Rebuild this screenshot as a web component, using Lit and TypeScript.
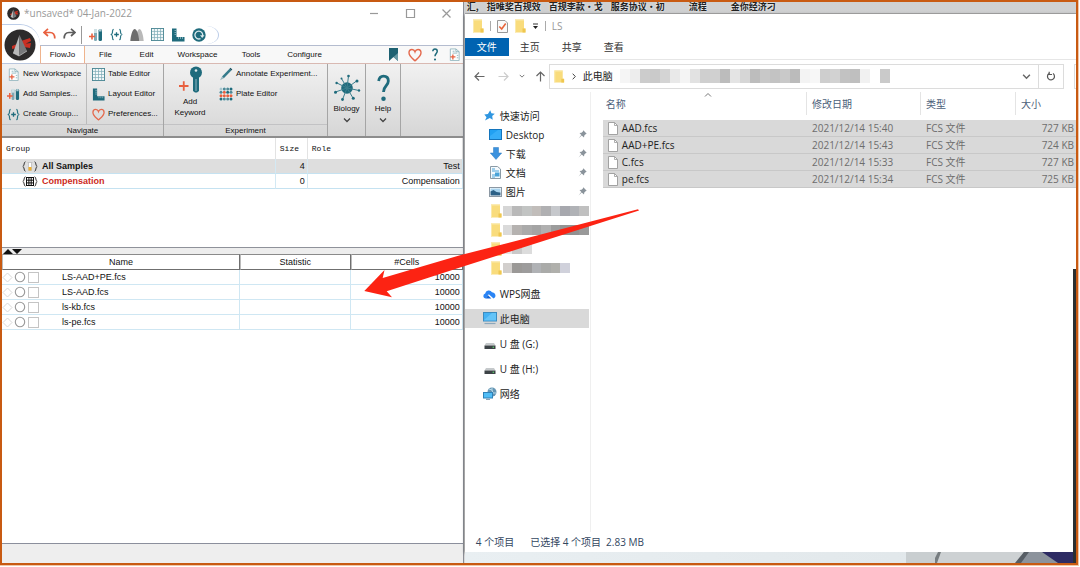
import { LitElement, html, css, svg, nothing } from "lit";
import { customElement } from "lit/decorators.js";

/* ---------- icons ---------- */

const icon = (w: number, h: number, view: string, body: unknown) =>
  html`<svg width=${w} height=${h} viewBox=${view} aria-hidden="true">${body}</svg>`;

const TEAL = "#1f6b7c";
const CORAL = "#e8603f";

const tubes = (s: number) => icon(s, s, "0 0 14 14", svg`
  <rect x="5" y="1" width="3" height="12" rx="1.3" fill="#7fa9b5"/>
  <path d="M5 1h3v4H5z" fill="#cfe0e4"/>
  <rect x="9.500" y="1" width="3.500" height="12" rx="1.500" fill="${TEAL}"/>
  <path d="M10 1h2.500v2.500H10z" fill="#a9c8d0"/>
  <path d="M0 8.500h6M3 5.500v6" stroke="${CORAL}" stroke-width="1.600"/>`);

const braces = (s: number) => icon(s, s, "0 0 14 14", svg`
  <path d="M4 1.500C2 1.500 3 4 2.500 5.500 2.200 6.500 1 7 .7 7c.3 0 1.500.5 1.800 1.500C3 10 2 12.500 4 12.500M10 1.500c2 0 1 2.500 1.500 4 .3 1 1.500 1.500 1.800 1.500-.3 0-1.500.5-1.800 1.500-.5 1.500.5 4-1.500 4" fill="none" stroke="#2a7585" stroke-width="1.300"/>
  <path d="M4.500 7h5M7 4.500v5" stroke="${TEAL}" stroke-width="1.400"/>`);

const grid = (s: number) => icon(s, s, "0 0 14 14", svg`
  <rect x=".5" y=".5" width="13" height="13" fill="#f4f9fa" stroke="#4b8794"/>
  <path d="M1 3.700h12M1 7h12M1 10.300h12M3.700 1v12M7 1v12M10.300 1v12" stroke="#7fadb7" stroke-width=".8"/>`);

const ruler = (s: number) => icon(s, s, "0 0 14 14", svg`
  <path d="M1 .5h4.500v8.500H13.500v4.500H1z" fill="${TEAL}"/>
  <path d="M3.500 2.500h2M3.500 4.500h2M3.500 6.500h2M7.500 9v2M9.500 9v2M11.500 9v2" stroke="#8fb9c3" stroke-width=".8"/>`);

const heart = (s: number) => icon(s, s, "0 0 14 14", svg`
  <path d="M7 12.800C4.500 10.500 1 8.200 1 4.800 1 2.800 2.400 1.500 4 1.500c1.400 0 2.500.9 3 2.300.5-1.400 1.600-2.300 3-2.300 1.600 0 3 1.300 3 3.300 0 3.400-3.500 5.700-6 8z" fill="none" stroke="#e4694d" stroke-width="1.400"/>`);

const newDoc = (s: number) => icon(s, s, "0 0 14 14", svg`
  <path d="M2.500 1h6l3.500 3v9.500h-9.500z" fill="#fbfdfd" stroke="#8fb3bc" stroke-width=".9"/>
  <path d="M8.500 1v3H12M5 3.500h2M5 5.500h5M9.500 8h1.500M9.500 10.500h1.500" fill="none" stroke="#7aa7b2" stroke-width=".8"/>
  <path d="M2.500 9.500h5.500M5.250 7v5.500" stroke="${CORAL}" stroke-width="1.400"/>`);

const pencil = icon(14, 14, "0 0 14 14", svg`
  <path d="M3 9.500L10.500 1.800l1.800 1.800L4.800 11.200z" fill="#347a8b"/>
  <path d="M10.500 1.800l1-1 1.800 1.800-1 1z" fill="#174f5e"/>
  <path d="M3 9.500l1.800 1.700L1 13.200z" fill="#93b4bd"/>`);

const plate = icon(14, 14, "0 0 14 14", svg`
  <rect x=".5" y=".5" width="13" height="13" fill="#eaf0f1"/>
  ${[2, 5.300, 8.700, 12].map((x, i) => [2, 5.300, 8.700, 12].map((y, j) => svg`
    <circle cx=${x} cy=${y} r="1.500" fill=${i === 0 && j === 0 ? "#a8c6ce" : j === 2 || (i === 1 && j === 1) ? CORAL : (i + j) % 3 === 0 ? TEAL : "#4f8997"}/>`))}`);

const key = icon(26, 27, "0 0 26 27", svg`
  <circle cx="19" cy="6.500" r="6" fill="${TEAL}"/>
  <circle cx="19" cy="4.500" r="1.300" fill="#dfe9eb"/>
  <path d="M16 10h6v15l-2 1.500h-2l-2-1.500z" fill="${TEAL}"/>
  <path d="M19 13v12" stroke="#8fb7c0" stroke-width="1"/>
  <path d="M2 20h9.500M6.750 15.200v9.600" stroke="${CORAL}" stroke-width="1.800"/>`);

const biology = icon(28, 28, "0 0 28 28", svg`
  <circle cx="14" cy="14" r="5.800" fill="${TEAL}"/>
  <g stroke="#3c7f8e" stroke-width="1">
    <path d="M14 14L15.500 2M14 14L23.500 7M14 14L26 16.500M14 14L20 24M14 14L9.500 25.500M14 14L2.500 18M14 14L4 9M14 14L8.500 4.500"/></g>
  <g fill="${TEAL}"><circle cx="15.500" cy="2" r="1.300"/><circle cx="24" cy="7" r="1.500"/><circle cx="26" cy="16.500" r="1.200"/><circle cx="20.300" cy="24.300" r="1.500"/><circle cx="9.500" cy="25.500" r="1.400"/><circle cx="2.500" cy="18.300" r="1.500"/><circle cx="3.600" cy="9" r="1.200"/><circle cx="8.500" cy="4.500" r="1"/></g>`);

const question = (w: number, h: number, sw: number) => icon(w, h, "0 0 12 26", svg`
  <path d="M1.500 6.500C2 3 4 2 6 2c2.800 0 4.500 1.800 4.500 4.600 0 4.400-4.500 4.400-4.500 10" fill="none" stroke="${TEAL}" stroke-width=${sw}/>
  <circle cx="6" cy="23" r="2.100" fill="${TEAL}"/>`);

const chevron = (s: number, color = "#444") => icon(s, s, "0 0 8 8", svg`
  <path d="M1 2.500L4 5.500l3-3" fill="none" stroke=${color} stroke-width="1.300"/>`);

const undo = icon(13, 14, "0 0 13 14", svg`
  <path d="M5 .8L1 4.500 5 8M1.500 4.500H7c3.200 0 4.800 2 4.800 6" fill="none" stroke="${CORAL}" stroke-width="1.700"/>`);
const redo = icon(13, 14, "0 0 13 14", svg`
  <path d="M8 .8L12 4.500 8 8M11.500 4.500H6c-3.200 0-4.800 2-4.800 6" fill="none" stroke="#5d5d5d" stroke-width="1.700"/>`);
const peaks = icon(14, 14, "0 0 14 14", svg`
  <path d="M5 13C6 5 8 1 9.500 1S13 5 13.700 13z" fill="#b9b9b9"/>
  <path d="M.3 13C1 5 3 1 4.700 1S8.500 5 9.200 13z" fill="#6e6e6e"/>`);
const swirl = icon(14, 14, "0 0 14 14", svg`
  <circle cx="7" cy="7" r="6.700" fill="${TEAL}"/>
  <path d="M8.500 10.600A3.900 3.900 0 1 1 10.600 8" fill="none" stroke="#dcebee" stroke-width="1.300"/>
  <path d="M8 7.300h4.500L10.200 10z" fill="#dcebee"/>`);
const bookmark = icon(9, 13, "0 0 9 13", svg`
  <path d="M0 0h9v13L4.500 9 0 13z" fill="#1d6172"/><path d="M9 5v8L4.500 9z" fill="#6899a5"/>`);

const logo = (s: number) => icon(s, s, "0 0 32 32", svg`
  <circle cx="16" cy="16" r="15.500" fill="#2d2b2b"/>
  <path d="M17 12l9-3 1 3-8 4zM19 15l8-1-1 5-6-1zM8 17l5-2-1 4-4 1z" fill="#c92f23"/>
  <path d="M15.500 6L9 24l6 3z" fill="#b9b9b9"/>
  <path d="M15.500 6L15 27l8-5z" fill="#77787a"/>
  <path d="M9 24l6 3 8-5" fill="none" stroke="#d8d8d8" stroke-width=".6"/>`);

const folder = (w = 12, h = 14) => icon(w, h, "0 0 12 14", svg`
  <path d="M1 .5h9v9h1.500v4H1z" fill="#f9dc7c"/>
  <path d="M1 .5h9v1H2v12H1z" fill="#fae9ac"/>
  <path d="M8.500 9.500h3v4h-3z" fill="#efc750"/>`);
const checkDoc = icon(11, 13, "0 0 11 13", svg`
  <path d="M.5.5h7.500l2.500 2.500v9.500H.5z" fill="#fafafa" stroke="#999"/>
  <path d="M2.300 6.500L4.700 9l4-5.500" fill="none" stroke="#e8653a" stroke-width="1.600"/>`);
const fileIcon = icon(10, 13, "0 0 10 13", svg`
  <path d="M.5.5h6l3 3v9h-9z" fill="#fff" stroke="#9a9a9a" stroke-width=".9"/><path d="M6.500.5v3h3" fill="none" stroke="#9a9a9a" stroke-width=".8"/>`);
const pinIcon = icon(9, 9, "0 0 9 9", svg`
  <path d="M5.300.3L8.700 3.700 7.600 4.200 6.300 5.600 6 7.500 3.700 5.500.5 8.600 3.300 5 1.500 3 3.500 2.700 4.900 1.400z" fill="#8a939b"/>`);
const star = icon(11, 11, "0 0 11 11", svg`
  <path d="M6.200.3l1.200 3 3.400.5-2.600 2.300.5 3.600-2.900-1.600L1 10.500l1.500-3.200L.3 4.600l3.600-.5z" fill="#2f96e0"/>`);
const desktopIcon = icon(13, 11, "0 0 13 11", svg`
  <rect x=".5" y=".5" width="12" height="10" fill="#21a0f2" stroke="#1475bd"/><path d="M1 7L9 1h3v9H1z" fill="#45b6fb" opacity=".6"/>`);
const download = icon(12, 13, "0 0 12 13", svg`
  <path d="M3.500.5h5v5.500h3.200L6 12.500.3 6h3.200z" fill="#3b92de" stroke="#2b78c0" stroke-width=".5"/>`);
const docIcon = icon(11, 13, "0 0 11 13", svg`
  <path d="M.5.5h7l3 2.500v9.500H.5z" fill="#f5fafd" stroke="#8a9aa5"/>
  <path d="M2 3h3M2 5h7M2 9h3M2 11h3" stroke="#4aa3d8"/><rect x="5" y="6.500" width="4.500" height="4" fill="#4aa3d8"/>`);
const picture = icon(13, 10, "0 0 13 10", svg`
  <rect x=".5" y=".5" width="12" height="9" fill="#fff" stroke="#8c98a3"/>
  <path d="M1.500 1.500h10v4h-10z" fill="#a9d4ef"/><path d="M1.500 4.500l3-1.500 3 2 4 .5v3h-10z" fill="#2c6187"/>`);
const cloud = icon(13, 10, "0 0 13 10", svg`
  <path d="M2.500 9.500a2.500 2.500 0 0 1-.3-4.900A3.700 3.700 0 0 1 9 3.200a3.300 3.300 0 0 1 1.500 6.300L5.800 5.200z" fill="#2a84f5"/>
  <path d="M2.500 9.500L5 6.200 8.300 9.500z" fill="#1263d6"/>`);
const pc = icon(14, 13, "0 0 14 13", svg`
  <rect x=".5" y=".5" width="13" height="8.500" fill="#45b2f3" stroke="#3d8cc0"/><path d="M1 8L9 1h4v7.500H1z" fill="#7cd0fc" opacity=".6"/><path d="M1.500 11.500h11" stroke="#8ba7bb" stroke-width="1.200"/>`);
const drive = icon(12, 12, "0 0 12 12", svg`
  <path d="M2 5h8l1.500 2.500H.5z" fill="#c5c9cb"/><rect x=".5" y="7.500" width="11" height="3.500" fill="#3d4347"/><circle cx="9.300" cy="9.300" r=".8" fill="#58d36b"/>`);
const network = icon(14, 13, "0 0 14 13", svg`
  <circle cx="9" cy="5" r="4.500" fill="#6595b3"/><path d="M6 2l3 1 1 3 3 0M9 .5v3" stroke="#b9d9e8" fill="none"/>
  <rect x=".5" y="5.500" width="9" height="5.500" fill="#50bdf6" stroke="#2f82b8"/><path d="M3 12.300h4" stroke="#6d8ea5"/>`);
const arrow = (d: string, color: string) => icon(11, 11, "0 0 11 11", svg`<path d=${d} fill="none" stroke=${color} stroke-width="1.200"/>`);
const refresh = icon(10, 10, "0 0 10 10", svg`
  <path d="M2.700 2.800A3.500 3.500 0 1 0 7 2.600M3.200 .8v2.700H6" fill="none" stroke="#555" stroke-width="1.200"/>`);

/* ---------- shared styles ---------- */

const base = css`
  *, *::before, *::after { box-sizing: border-box; }
  svg { display: block; flex: none; }
  button { appearance: none; border: 0; margin: 0; padding: 0; background: none; font: inherit; color: inherit; display: flex; align-items: center; }
  a { color: inherit; text-decoration: none; }
  table { border-spacing: 0; border-collapse: separate; width: 100%; table-layout: fixed; }
  th, td { padding: 0; font-weight: normal; text-align: left; white-space: nowrap; overflow: hidden; }
`;

/* ---------- cytometry workspace window ---------- */

@customElement("flow-window")
class FlowWindow extends LitElement {
  static styles = [base, css`
    :host { display: flex; flex-direction: column; background: #fff; color: #111; font: 9px/12px "Liberation Sans", Arial, sans-serif; border-right: 1px solid #8b8e96; min-width: 0; }
    .title { display: flex; align-items: center; height: 22px; padding: 0 11px 0 5px; gap: 4px; color: #999; font: 10px/14px "Open Sans", "Noto Sans", sans-serif; }
    .title .name { flex: 1; }
    .controls { display: flex; gap: 25px; }
    .head { display: grid; grid-template-columns: 38px 1fr; grid-template-rows: 22px 18px; }
    .orb { grid-row: 1 / 3; display: flex; align-items: center; padding: 4px 0 3px 2px; border-bottom: 1px solid #b9c6de; border-top: 1px solid #bccde8; border-top-right-radius: 20px; }
    .quick { display: flex; align-items: center; border-bottom: 1px solid #b4bccf; padding-left: 3px; gap: 7px; }
    .quick .bar { width: 1px; height: 18px; background: #999; margin: 0 0 0 -2px; }
    .quick .tools { display: flex; align-items: center; gap: 7px; height: 18px; padding-right: 12px; border-top-right-radius: 12px 9px; border-bottom-right-radius: 12px 9px; border-right: 1px solid #bccde8; }
    .menu { display: flex; align-items: center; font-size: 8px; border-bottom: 1px solid #d9b9b2; background: #f8f8f8; }
    .menu button { height: 100%; justify-content: center; }
    .menu .tab { width: 45px; border-left: 1px solid #efb48d; border-right: 1px solid #efb48d; background: #fff; }
    .menu .m { width: 41px; }
    .menu .wide { width: 61px; }
    .menu .mid { width: 46px; }
    .menu .right { margin-left: auto; display: flex; align-items: center; gap: 10px; padding-right: 2px; }
    .ribbon { display: flex; height: 74px; font-size: 8px; line-height: 10px; background: linear-gradient(#f1f1f1, #d6d6d6); border-bottom: 2px solid #8d8d8d; }
    .group { display: flex; flex-direction: column; border-right: 1px solid #a5a5a5; }
    .cols { display: flex; height: 60px; }
    .caption { height: 12px; line-height: 11px; text-align: center; border-top: 1px solid #c2c2c4; }
    .col { display: grid; grid-template-rows: repeat(3, 20px); align-content: start; padding: 0 4px 0 5px; }
    .col + .col { border-left: 1px solid #bbb; }
    .col button, .ann button { gap: 3px; white-space: nowrap; }
    .nav1 { width: 84px; }
    .nav2 { width: 77px; padding-right: 0; }
    .kw { width: 52px; flex-direction: column; padding-top: 2px; line-height: 11px; text-align: center; gap: 3px; }
    .ann { display: grid; grid-template-rows: repeat(2, 20px); align-content: start; width: 111px; padding-left: 3px; }
    .big { flex-direction: column; height: 100%; padding-top: 10px; gap: 2px; border-right: 1px solid #a5a5a5; }
    .bio { width: 38px; }
    .help { width: 35px; }
    .groups { flex: 0 0 110px; border-bottom: 1px solid #8f929a; }
    .groups th { height: 21px; padding-left: 4px; font: 8px/12px "Liberation Mono", monospace; border-right: 1px solid #e3e3e3; }
    .groups td { height: 15px; border-bottom: 1px solid #c5e2f1; border-right: 1px solid #d3e9f4; }
    .groups .sel td { background: #dedede; }
    .groups .g { display: flex; align-items: center; gap: 4px; padding-left: 20px; font-weight: bold; }
    .groups .red { color: #cc2a22; }
    .groups td.num { text-align: right; padding-right: 2px; }
    .c-size { width: 32px; }
    .c-role { width: 155px; }
    .splitter { display: flex; align-items: center; height: 6px; background: #ededed; padding-left: 1px; }
    .samples { flex: 1; border-bottom: 1px solid #8b8f9c; min-height: 100px; }
    .samples th { height: 16px; text-align: center; border: 1px solid #6f6f6f; border-left-color: #bbb; border-top: 1px solid #8a8a8a; line-height: 13px; }
    .samples td { height: 15px; border-bottom: 1px solid #cfe7f3; border-right: 1px solid #cfe7f3; }
    .samples td.num { text-align: right; padding-right: 2px; }
    .c-stat { width: 111px; }
    .c-cells { width: 112px; }
    .row { display: flex; align-items: center; gap: 1px; }
    .row .file { margin-left: 22px; }
    .row input { appearance: none; width: 11px; height: 11px; margin: 0 0 0 1px; border: 1px solid #c4c4c4; background: #fff; }
    .foot { height: 19px; background: #eee; }
  `];

  private groups = [
    { name: "All Samples", size: 4, role: "Test", sel: true },
    { name: "Compensation", size: 0, role: "Compensation", sel: false },
  ];
  private samples = ["LS-AAD+PE.fcs", "LS-AAD.fcs", "ls-kb.fcs", "ls-pe.fcs"];

  private groupIcon(first: boolean) {
    return icon(16, 11, "0 0 16 11", svg`
      <path d="M3.500.8C1.500.8 2.800 5 .8 5.500c2 .5.700 4.700 2.700 4.700M12.500.8c2 0 .700 4.200 2.700 4.700-2 .5-.700 4.700-2.700 4.700" fill="none" stroke="#333"/>
      ${first
        ? svg`<path d="M5.500 1.500h5M6.500 1.500v8h3v-8" fill="#fff" stroke="#bbb" stroke-width=".8"/><path d="M6.500 6h3v3.500h-3z" fill="#f0b030"/>`
        : svg`<rect x="4.500" y="1.500" width="7" height="8" fill="#fff" stroke="#111"/><path d="M4 4.200h8M4 6.900h8M6.900 1.500v8M9.200 1.500v8" stroke="#111"/>`}`);
  }

  render() {
    return html`
      <header class="title">
        ${logo(13)}<span class="name">*unsaved* 04-Jan-2022</span>
        <div class="controls">
          <button aria-label="Minimize">${arrow("M1 5.500h8", "#999")}</button>
          <button aria-label="Maximize">${arrow("M1.500 1.500h8v8h-8z", "#999")}</button>
          <button aria-label="Close">${arrow("M1.500 1.500l8 8M9.500 1.500l-8 8", "#999")}</button>
        </div>
      </header>
      <div class="head">
        <button class="orb" aria-label="Application menu">${logo(32)}</button>
        <div class="quick">
          <button aria-label="Undo">${undo}</button>
          <button aria-label="Redo">${redo}</button>
          <span class="bar"></span>
          <div class="tools">
            <button aria-label="Add samples">${tubes(14)}</button>
            <button aria-label="Create group">${braces(13)}</button>
            <button aria-label="Histogram">${peaks}</button>
            <button aria-label="Tables">${grid(13)}</button>
            <button aria-label="Layouts">${ruler(14)}</button>
            <button aria-label="Sync">${swirl}</button>
          </div>
        </div>
        <nav class="menu">
          <button class="tab">FlowJo</button><button class="m">File</button><button class="m">Edit</button>
          <button class="wide">Workspace</button><button class="mid">Tools</button><button class="wide">Configure</button>
          <div class="right">
            <button aria-label="Bookmark">${bookmark}</button>
            <button aria-label="Favorite">${heart(14)}</button>
            <button aria-label="Help">${question(6, 13, 3)}</button>
            <button aria-label="New">${newDoc(13)}</button>
          </div>
        </nav>
      </div>
      <div class="ribbon">
        <section class="group">
          <div class="cols">
            <div class="col nav1">
              <button>${newDoc(13)}New Workspace</button>
              <button>${tubes(13)}Add Samples...</button>
              <button>${braces(13)}Create Group...</button>
            </div>
            <div class="col nav2">
              <button>${grid(13)}Table Editor</button>
              <button>${ruler(13)}Layout Editor</button>
              <button>${heart(13)}Preferences...</button>
            </div>
          </div>
          <div class="caption">Navigate</div>
        </section>
        <section class="group">
          <div class="cols">
            <button class="kw">${key}<span>Add<br />Keyword</span></button>
            <div class="ann">
              <button>${pencil}Annotate Experiment...</button>
              <button>${plate}Plate Editor</button>
            </div>
          </div>
          <div class="caption">Experiment</div>
        </section>
        <button class="big bio">${biology}<span>Biology</span>${chevron(8)}</button>
        <button class="big help">${question(13, 28, 2.600)}<span>Help</span>${chevron(8)}</button>
      </div>
      <div class="groups">
        <table>
          <colgroup><col /><col class="c-size" /><col class="c-role" /></colgroup>
          <thead><tr><th>Group</th><th>Size</th><th>Role</th></tr></thead>
          <tbody>${this.groups.map((g) => html`
            <tr class=${g.sel ? "sel" : ""}>
              <td><div class="g ${g.sel ? "" : "red"}">${this.groupIcon(g.sel)}${g.name}</div></td>
              <td class="num">${g.size}</td><td class="num">${g.role}</td>
            </tr>`)}
          </tbody>
        </table>
      </div>
      <div class="splitter">${icon(19, 5, "0 0 19 5", svg`<path d="M0 5L5 0l5 5zM9 0h10l-5 5z" fill="#111"/>`)}</div>
      <div class="samples">
        <table>
          <colgroup><col /><col class="c-stat" /><col class="c-cells" /></colgroup>
          <thead><tr><th>Name</th><th>Statistic</th><th>#Cells</th></tr></thead>
          <tbody>${this.samples.map((s) => html`
            <tr>
              <td><div class="row">
                ${icon(11, 11, "0 0 11 11", svg`<path d="M5.500 1L10 5.500 5.500 10 1 5.500z" fill="#fff" stroke="#d8d8d8"/>`)}
                ${icon(12, 12, "0 0 12 12", svg`<circle cx="6" cy="6" r="4.700" fill="#fff" stroke="#999" stroke-width="1.100"/>`)}
                <input type="checkbox" aria-label=${s} /><span class="file">${s}</span>
              </div></td>
              <td></td><td class="num">10000</td>
            </tr>`)}
          </tbody>
        </table>
      </div>
      <div class="foot"></div>`;
  }
}

/* ---------- file explorer window ---------- */

interface Place { label?: string; icon: unknown; pin?: boolean; sel?: boolean; blur?: string[] }

@customElement("file-window")
class FileWindow extends LitElement {
  static styles = [base, css`
    :host { display: flex; flex-direction: column; background: #fff; color: #222; font: 10px/14px "Open Sans", "Noto Sans CJK SC", sans-serif; min-width: 0; overflow: hidden; }
    .title { display: flex; align-items: center; gap: 6px; height: 24px; padding-left: 7px; color: #999; }
    .title .bar { width: 1px; height: 10px; background: #aaa; }
    .tabs { display: flex; height: 22px; border-bottom: 1px solid #e6e6e6; }
    .tabs button { justify-content: center; width: 42px; height: 18px; color: #333; }
    .tabs .on { width: 44px; background: #0063b1; color: #fff; }
    .bar-row { display: flex; align-items: center; height: 32px; padding-left: 9px; }
    .moves { display: flex; align-items: center; gap: 10px; width: 75px; }
    .moves button:first-child { margin-right: 3px; }
    .path { display: flex; flex: 1; height: 25px; border: 1px solid #dcdcdc; align-items: center; padding-left: 3px; gap: 7px; margin-right: 10px; }
    .path .grow { flex: 1; min-width: 0; }
    .path .re { width: 25px; height: 100%; justify-content: center; border-left: 1px solid #dcdcdc; }
    .search { width: 2px; height: 25px; border: 1px solid #dcdcdc; border-right: 0; }
    .mosaic { display: flex; height: 14px; }
    .mosaic i { flex: 1 1 10px; max-width: 10px; }
    .main { display: flex; flex: 1; }
    .side { flex: 0 0 126px; border-right: 1px solid #efefef; padding-top: 14px; margin: 0; }
    .place { display: flex; align-items: center; height: 19px; width: 124px; padding-left: 18px; gap: 3px; white-space: nowrap; }
    .place .ic { display: flex; justify-content: center; width: 14px; }
    .place.sub { padding-left: 24px; }
    .place.gap { margin-top: 6px; }
    .place.first { margin-top: 7px; }
    .place.sel { background: #d9d9d9; }
    .place .pin { margin-left: auto; padding-right: 2px; }
    .place .mosaic { height: 10px; flex: 1; margin-left: -3px; }
    .files { flex: 1; padding-left: 12px; min-width: 0; }
    .files th { height: 23px; color: #4c607a; padding-left: 5px; border-right: 1px solid #e4e4e4; }
    .files th:first-child { padding-left: 3px; position: relative; }
    .files th:last-child { border-right: 0; }
    .sort { position: absolute; left: 50%; top: 0; }
    .files .space td { height: 5px; border: 0; background: none; }
    .files td { height: 17px; background: #d9d9d9; border-bottom: 1px solid #c8c8c8; padding-left: 5px; color: #6d6d6d; line-height: 14px; }
    .files td.name { color: #222; padding-left: 5px; }
    .files td.size { text-align: right; padding: 0 2px 0 0; }
    .nm { display: flex; align-items: center; gap: 4px; }
    .c-date { width: 114px; } .c-type { width: 95px; } .c-size { width: 60px; }
    .status { display: flex; gap: 16px; height: 20px; align-items: center; padding-left: 11px; color: #33475f; }
    .status .sum { display: flex; gap: 5px; }
  `];

  private trail = ["#f5f5f5", "#ededed", "#ccc", "#cacaca", "#d4d4d4", "#e9e9e9", "#f4f4f4", "#e2e2e2", "#cfcfcf", "#d0d0d0", "#bcbcbc", "#e4e4e4", "#d6d6d6", "#bdbdbd", "#c8c8c8", "#c3c3c3", "#c9c9c9", "#bbb", "#f3f3f3", "#f7f7f7", "#cecece", "#d2d2d2", "#c2c2c2", "#bfbfbf", "#f1f1f1", "#fff", "#cacaca"];
  private places: Place[] = [
    { label: "快速访问", icon: star },
    { label: "Desktop", icon: desktopIcon, pin: true },
    { label: "下载", icon: download, pin: true },
    { label: "文档", icon: docIcon, pin: true },
    { label: "图片", icon: picture, pin: true },
    { icon: folder(), blur: ["#d6d6d6", "#b9b9b9", "#c2c4c3", "#c1bdba", "#b0b0b2", "#c6c8cc", "#a7a8ae", "#b0b2b6", "#c0c0c0"] },
    { icon: folder(), blur: ["#dadada", "#b5b2b0", "#aaa", "#a4a4a4", "#b0b0b0", "#9c9c9c", "#949494", "#929292", "#999"] },
    { icon: folder(), blur: ["#e5e5e5", "#c9c9c9", "#dcdcdc", "#fff", "#fff", "#fff", "#fff", "#fff", "#fff"] },
    { icon: folder(), blur: ["#d2cfcd", "#9b9997", "#9d9c9c", "#b0b2b5", "#aaaba9", "#b0b0ac", "#d0d1db", "#fff", "#fff"] },
    { label: "WPS网盘", icon: cloud },
    { label: "此电脑", icon: pc, sel: true },
    { label: "U 盘 (G:)", icon: drive },
    { label: "U 盘 (H:)", icon: drive },
    { label: "网络", icon: network },
  ];
  private files = [
    ["AAD.fcs", "2021/12/14 15:40", "727 KB"],
    ["AAD+PE.fcs", "2021/12/14 15:43", "724 KB"],
    ["C.fcs", "2021/12/14 15:33", "727 KB"],
    ["pe.fcs", "2021/12/14 15:34", "725 KB"],
  ];

  private mosaic(colors: string[]) {
    return html`<span class="mosaic">${colors.map((c) => html`<i style="background:${c}"></i>`)}</span>`;
  }

  render() {
    return html`
      <header class="title">
        ${folder()}<span class="bar"></span>${checkDoc}${folder()}
        ${icon(7, 7, "0 0 7 7", svg`<path d="M1 1h5" stroke="#333"/><path d="M1 3h5L3.500 6z" fill="#222"/>`)}
        <span class="bar"></span><span>LS</span>
      </header>
      <nav class="tabs"><button class="on">文件</button><button>主页</button><button>共享</button><button>查看</button></nav>
      <div class="bar-row">
        <div class="moves">
          <button aria-label="Back">${arrow("M10.500 5.500H1M5 1.500l-4 4 4 4", "#666")}</button>
          <button aria-label="Forward">${arrow("M.5 5.500H10M6 1.500l4 4-4 4", "#ccc")}</button>
          <button aria-label="Recent">${chevron(6, "#777")}</button>
          <button aria-label="Up">${arrow("M5.500 10.500V1M1.500 5l4-4 4 4", "#666")}</button>
        </div>
        <div class="path">
          ${folder(12, 13)}${icon(4, 7, "0 0 4 7", svg`<path d="M.7.700l2.600 2.800L.7 6.300" fill="none" stroke="#444"/>`)}
          <button>此电脑</button>
          <div class="grow">${this.mosaic(this.trail)}</div>
          <button aria-label="History">${chevron(9, "#666")}</button>
          <button class="re" aria-label="Refresh">${refresh}</button>
        </div>
        <div class="search"></div>
      </div>
      <div class="main">
        <nav class="side">${this.places.map((p, i) => html`
          <a href="#" class="place ${i > 0 && i < 9 ? "sub" : ""} ${i === 9 ? "first" : i > 9 ? "gap" : ""} ${p.sel ? "sel" : ""}">
            <span class="ic">${p.icon}</span>${p.label ?? nothing}${p.blur ? this.mosaic(p.blur) : nothing}
            ${p.pin ? html`<span class="pin">${pinIcon}</span>` : nothing}
          </a>`)}
        </nav>
        <div class="files">
          <table>
            <colgroup><col /><col class="c-date" /><col class="c-type" /><col class="c-size" /></colgroup>
            <thead><tr><th>名称<span class="sort">${icon(8, 6, "0 0 8 6", svg`<path d="M1 4.500l3-3 3 3" fill="none" stroke="#777"/>`)}</span></th><th>修改日期</th><th>类型</th><th>大小</th></tr></thead>
            <tbody>
              <tr class="space"><td colspan="4"></td></tr>
              ${this.files.map(([n, d, s]) => html`
                <tr><td class="name"><div class="nm">${fileIcon}${n}</div></td><td>${d}</td><td>FCS 文件</td><td class="size">${s}</td></tr>`)}
            </tbody>
          </table>
        </div>
      </div>
      <footer class="status"><span>4 个项目</span><span class="sum"><span>已选择 4 个项目</span><span>2.83 MB</span></span></footer>`;
  }
}

/* ---------- desktop ---------- */

@customElement("app-root")
class AppRoot extends LitElement {
  static styles = [base, css`
    :host { display: block; padding: 0 2px 2px 0; background: #fff; }
    .frame { position: relative; display: grid; grid-template-columns: 43% 57%; min-height: calc(100vh - 2px); border: 2px solid #c85a12; box-shadow: 0 0 0 1px #f1c6a8; overflow: hidden; }
    .desk { display: flex; flex-direction: column; background: linear-gradient(#cfd0d1, #d9d9d9); padding-left: 1px; min-width: 0; }
    .labels { display: flex; height: 12px; gap: 8px; padding-left: 2px; color: #222; font: bold 9px/10px "Noto Sans CJK SC", sans-serif; white-space: nowrap; border-bottom: 1px solid #aaa; text-shadow: 0 0 2px #fff; }
    .labels .far { margin-left: 16px; }
    file-window { flex: 1; box-shadow: 0 1px 3px #555; }
    .floor { display: flex; justify-content: flex-end; height: 11px; background: linear-gradient(90deg, #e9eff2, #dfe5e8); }
    .edge { position: absolute; right: 0; top: 267px; bottom: 0; width: 3px; background: #2b2f31; }
    .pointer { position: absolute; left: 360px; top: 204px; }
  `];

  render() {
    return html`
      <div class="frame">
        <flow-window></flow-window>
        <div class="desk">
          <div class="labels"><span>汇,</span><span>指唯奖百规效</span><span>百规李款·戈</span><span>服务协议·初</span><span class="far">流程</span><span class="far">金你经济刁</span></div>
          <file-window></file-window>
          <div class="floor">${icon(170, 11, "0 0 170 11", svg`
            <path d="M0 0h32l-3 11H0z" fill="#c9ced0"/><path d="M32 0h86l-6 11H29z" fill="#cdd1d3"/>
            <path d="M32 0l-3 6v5h2l4-11z" fill="#777d80"/><path d="M118 0h52v11h-58z" fill="#8c939c"/>
            <path d="M118 0h5l-8 11h-6z" fill="#565d64"/><path d="M136 0h34v11h-18z" fill="#2d2b63"/>`)}</div>
        </div>
        <div class="edge"></div>
        <div class="pointer">${icon(280, 96, "362 206 280 96", svg`
          <path d="M364.300 291L384.500 270 382.700 278 460 255.300 638 209.300 639 210.500 460 267.500 386.700 291.300 392 297.300z" fill="#fc2313"/>`)}</div>
      </div>`;
  }
}
